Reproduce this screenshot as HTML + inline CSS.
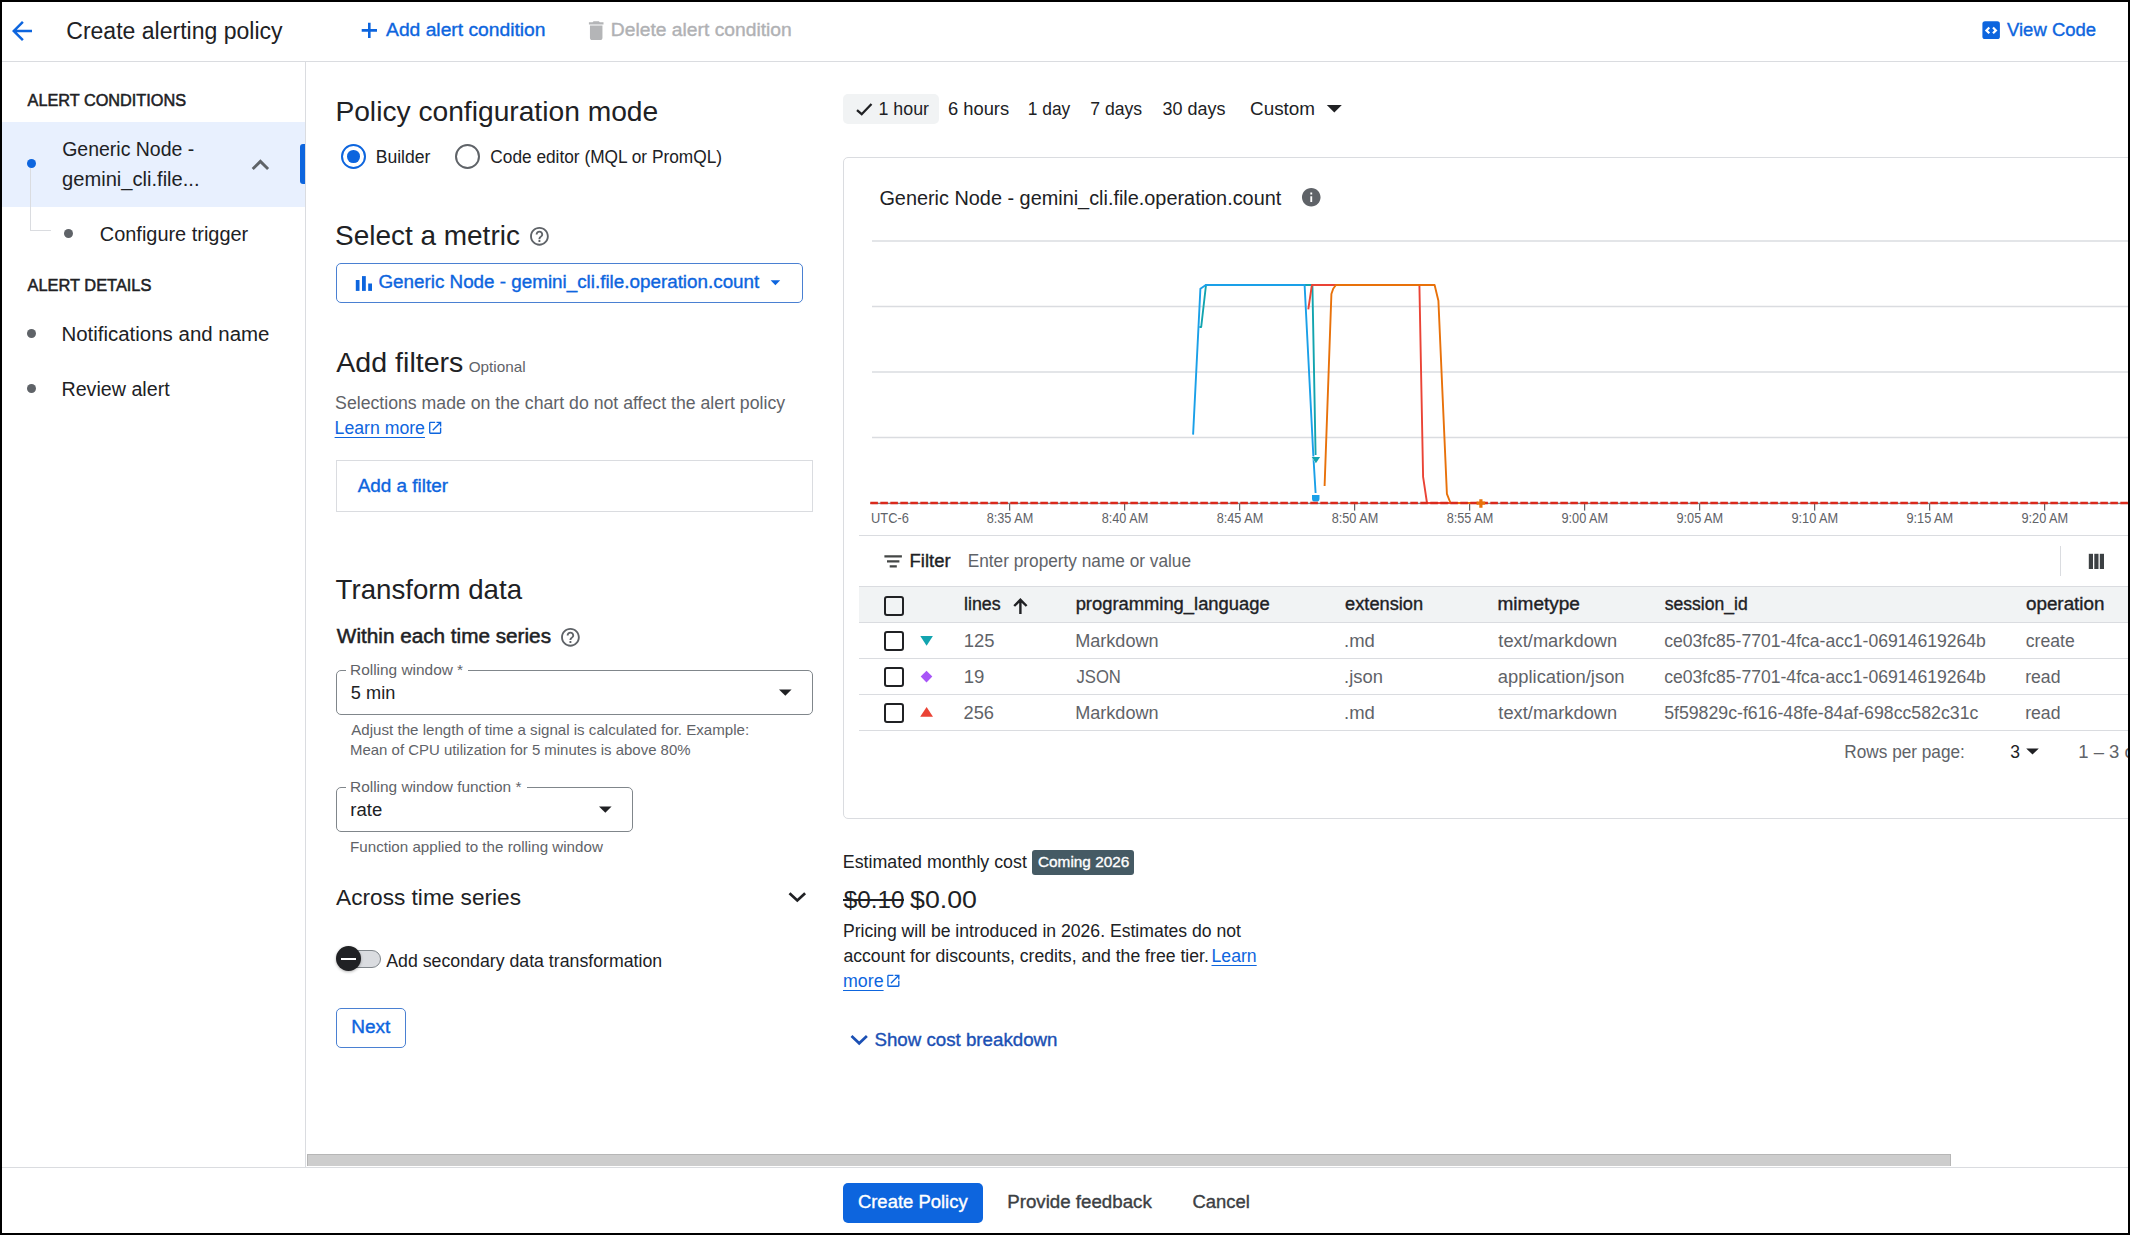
<!DOCTYPE html>
<html lang="en">
<head>
<meta charset="utf-8">
<title>Create alerting policy</title>
<style>
html,body{margin:0;padding:0;}
body{width:2130px;height:1235px;background:#fff;overflow:hidden;position:relative;font-family:"Liberation Sans", sans-serif;}
.t{position:absolute;white-space:pre;line-height:1;font-family:"Liberation Sans", sans-serif;transform-origin:0 0;}
.b{position:absolute;box-sizing:border-box;}
svg.full{position:absolute;left:0;top:0;}
</style>
</head>
<body>
<!-- ===== layout boxes ===== -->
<div class="b" style="left:2px;top:61px;width:2126px;height:1px;background:#dadce0;"></div>
<div class="b" style="left:305px;top:62px;width:1px;height:1105px;background:#dadce0;"></div>
<div class="b" style="left:2px;top:122px;width:303px;height:85px;background:#e8f0fe;"></div>
<div class="b" style="left:300px;top:144px;width:5px;height:40px;background:#0d65de;border-radius:3px 0 0 3px;"></div>
<!-- tree connector -->
<div class="b" style="left:30px;top:168px;width:1px;height:63px;background:#dadce0;"></div>
<div class="b" style="left:30px;top:230px;width:21px;height:1px;background:#dadce0;"></div>
<!-- step dots -->
<div class="b" style="left:26.5px;top:158.5px;width:9px;height:9px;border-radius:50%;background:#0d65de;"></div>
<div class="b" style="left:63.7px;top:228.5px;width:9px;height:9px;border-radius:50%;background:#5f6368;"></div>
<div class="b" style="left:26.7px;top:328.7px;width:9px;height:9px;border-radius:50%;background:#5f6368;"></div>
<div class="b" style="left:26.7px;top:383.7px;width:9px;height:9px;border-radius:50%;background:#5f6368;"></div>

<!-- radios -->
<div class="b" style="left:340.5px;top:144.2px;width:25px;height:25px;border-radius:50%;border:2.5px solid #0d65de;"></div>
<div class="b" style="left:347.2px;top:150.1px;width:12.6px;height:12.6px;border-radius:50%;background:#0d65de;"></div>
<div class="b" style="left:454.5px;top:144.2px;width:25px;height:25px;border-radius:50%;border:2.5px solid #5f6368;"></div>

<!-- metric button -->
<div class="b" style="left:336px;top:263px;width:467px;height:40px;border:1px solid #4a80d2;border-radius:5px;"></div>
<!-- add filter box -->
<div class="b" style="left:336px;top:460px;width:477px;height:52px;border:1px solid #dadce0;"></div>

<!-- rolling window select -->
<div class="b" style="left:336px;top:670px;width:477px;height:45px;border:1px solid #80868b;border-radius:5px;"></div>
<div class="b" style="left:345.6px;top:669px;width:122.8px;height:3px;background:#fff;"></div>
<!-- rolling window function select -->
<div class="b" style="left:336px;top:787px;width:297px;height:45px;border:1px solid #80868b;border-radius:5px;"></div>
<div class="b" style="left:345.6px;top:786px;width:181.4px;height:3px;background:#fff;"></div>

<!-- toggle -->
<div class="b" style="left:340px;top:950.2px;width:41px;height:17.6px;border-radius:9px;background:#dadce0;border:1px solid #80868b;"></div>
<div class="b" style="left:336px;top:946.4px;width:24.8px;height:24.8px;border-radius:50%;background:#202124;box-shadow:0 1px 3px rgba(0,0,0,.3);"></div>
<div class="b" style="left:340.8px;top:957.8px;width:15px;height:2px;background:#fff;"></div>

<!-- next button -->
<div class="b" style="left:336px;top:1008px;width:70px;height:40px;border:1px solid #4a80d2;border-radius:5px;"></div>

<!-- 1 hour chip -->
<div class="b" style="left:843px;top:94px;width:96px;height:30px;background:#f1f3f4;border-radius:5px;"></div>

<!-- chart card -->
<div class="b" style="left:843px;top:157px;width:1400px;height:662px;border:1px solid #dadce0;border-radius:5px;"></div>
<!-- under-chart line, table lines -->
<div class="b" style="left:859px;top:535px;width:1269px;height:1px;background:#dadce0;"></div>
<div class="b" style="left:859px;top:586px;width:1269px;height:37px;background:#f1f3f4;border-top:1px solid #dadce0;border-bottom:1px solid #dadce0;"></div>
<div class="b" style="left:859px;top:658px;width:1269px;height:1px;background:#dadce0;"></div>
<div class="b" style="left:859px;top:694px;width:1269px;height:1px;background:#dadce0;"></div>
<div class="b" style="left:859px;top:730px;width:1269px;height:1px;background:#dadce0;"></div>
<div class="b" style="left:2060px;top:546px;width:1px;height:30px;background:#dadce0;"></div>
<!-- checkboxes -->
<div class="b" style="left:884px;top:596px;width:20px;height:20px;border:2.2px solid #202124;border-radius:3px;"></div>
<div class="b" style="left:884px;top:631px;width:20px;height:20px;border:2.2px solid #202124;border-radius:3px;background:#fff;"></div>
<div class="b" style="left:884px;top:667px;width:20px;height:20px;border:2.2px solid #202124;border-radius:3px;background:#fff;"></div>
<div class="b" style="left:884px;top:703px;width:20px;height:20px;border:2.2px solid #202124;border-radius:3px;background:#fff;"></div>

<!-- strike line for $0.10 -->
<div class="b" style="left:842.9px;top:898.9px;width:61.4px;height:2.1px;background:#202124;z-index:5;"></div>
<!-- coming 2026 badge -->
<div class="b" style="left:1032px;top:850px;width:102px;height:25px;background:#455a64;border-radius:3px;"></div>

<!-- scrollbar + footer -->
<div class="b" style="left:307px;top:1154px;width:1644px;height:12px;background:#cdcdcd;border:1px solid #b6b6b6;border-bottom:none;"></div>
<div class="b" style="left:2px;top:1167px;width:2126px;height:1px;background:#dadce0;"></div>
<div class="b" style="left:843px;top:1183px;width:140px;height:40px;background:#0d65de;border-radius:5px;"></div>

<!-- ===== full-page SVG: chart + icons ===== -->
<svg class="full" width="2130" height="1235" viewBox="0 0 2130 1235">
  <!-- gridlines -->
  <g stroke="#dadce0" stroke-width="1.3">
    <line x1="872" y1="241" x2="2128" y2="241"/>
    <line x1="872" y1="306.5" x2="2128" y2="306.5"/>
    <line x1="872" y1="372" x2="2128" y2="372"/>
    <line x1="872" y1="437.5" x2="2128" y2="437.5"/>
    <line x1="872" y1="503.5" x2="2128" y2="503.5"/>
  </g>
  <!-- x ticks -->
  <g stroke="#5f6368" stroke-width="1.25">
    <line x1="1009.6" y1="503" x2="1009.6" y2="510.6"/>
    <line x1="1124.6" y1="503" x2="1124.6" y2="510.6"/>
    <line x1="1239.6" y1="503" x2="1239.6" y2="510.6"/>
    <line x1="1354.6" y1="503" x2="1354.6" y2="510.6"/>
    <line x1="1469.6" y1="503" x2="1469.6" y2="510.6"/>
    <line x1="1584.6" y1="503" x2="1584.6" y2="510.6"/>
    <line x1="1699.6" y1="503" x2="1699.6" y2="510.6"/>
    <line x1="1814.6" y1="503" x2="1814.6" y2="510.6"/>
    <line x1="1929.6" y1="503" x2="1929.6" y2="510.6"/>
    <line x1="2044.6" y1="503" x2="2044.6" y2="510.6"/>
  </g>
  <!-- axis baseline -->
  <line x1="870.3" y1="503.4" x2="2128" y2="503.4" stroke="#80868b" stroke-width="1.25"/>
  <!-- series -->
  <g fill="none" stroke-width="1.9" stroke-linejoin="round" stroke-linecap="butt">
    <polyline stroke="#12a4af" points="1199.4,327 1201.2,327 1206,285 1312.4,285 1315.6,455"/>
    <polyline stroke="#1aa0e8" points="1193.1,434.6 1200.4,288.7 1205.8,285 1304.6,285 1313.3,455 1315.6,493"/>
    <polyline stroke="#ea4335" points="1308.3,309.4 1311.9,285 1419.4,285 1423.1,476.8 1427,503 1451,503"/>
    <polyline stroke="#e8710a" points="1324.6,486 1331.4,294 1333.2,288.8 1335.9,285 1434.6,285 1438.4,300.8 1446.9,493.8 1450.5,503 1480.8,503"/>
  </g>
  <!-- markers -->
  <path d="M1311.1 456.4h9.6l-4.8 7.4z" fill="#fff"/>
  <path d="M1311.7 457h8.4l-4.2 6.2z" fill="#12a4af"/>
  <path d="M1312 495.1h7.5v3.3a3.2 3.2 0 0 1-3.2 3.2h-1.1a3.2 3.2 0 0 1-3.2-3.2z" fill="#1aa0e8"/>
  <!-- threshold -->
  <line x1="870.3" y1="503.05" x2="2128" y2="503.05" stroke="#d92a1c" stroke-width="2.5" stroke-dasharray="7.6 2.4"/>
  <path d="M1476.6 503.2h8.5M1480.9 499.2v8.5" stroke="#e8710a" stroke-width="3.2" fill="none"/>

  <!-- table row markers -->
  <path d="M920.3 636h12.6l-6.3 9.8z" fill="#12a4af"/>
  <path d="M926.5 670.8l5.8 5.8-5.8 5.8-5.8-5.8z" fill="#a855f7"/>
  <path d="M920.2 716.8h12.8l-6.4-9.8z" fill="#ea4335"/>

  <!-- === icons (material paths in 24-unit boxes) === -->
  <!-- back arrow -->
  <g transform="translate(7,16) scale(1.25)" fill="#0d65de"><path d="M20 11H7.83l5.59-5.59L12 4l-8 8 8 8 1.41-1.41L7.83 13H20v-2z"/></g>
  <!-- plus -->
  <path d="M361.7 29.1h15.3v2.6h-15.3zM368 22.8h2.6v15.2h-2.6z" fill="#0d65de"/>
  <!-- trash -->
  <g transform="translate(583.7,18.2) scale(1.0417)" fill="#b4b5b7"><path d="M6 19c0 1.1.9 2 2 2h8c1.1 0 2-.9 2-2V7H6v12zM19 4h-3.5l-1-1h-5l-1 1H5v2h14V4z"/></g>
  <!-- view code -->
  <rect x="1982.4" y="21.3" width="17.5" height="17.7" rx="2.6" fill="#0d65de"/>
  <path d="M1989.3 27.5l-2.9 2.9 2.9 2.9M1993 27.5l2.9 2.9-2.9 2.9" stroke="#fff" stroke-width="2.2" fill="none"/>
  <!-- sidebar chevron up -->
  <g transform="translate(243,147.7) scale(1.45)" fill="#5f6368"><path d="M12 8l-6 6 1.41 1.41L12 10.83l4.59 4.58L18 14z"/></g>
  <!-- help outline icons -->
  <g transform="translate(528.2,225.1) scale(0.935)" fill="#5f6368"><path d="M11 18h2v-2h-2v2zm1-16C6.48 2 2 6.48 2 12s4.48 10 10 10 10-4.48 10-10S17.52 2 12 2zm0 18c-4.41 0-8-3.59-8-8s3.59-8 8-8 8 3.59 8 8-3.59 8-8 8zm0-14c-2.21 0-4 1.79-4 4h2c0-1.1.9-2 2-2s2 .9 2 2c0 2-3 1.75-3 5h2c0-2.25 3-2.5 3-5 0-2.21-1.79-4-4-4z"/></g>
  <g transform="translate(559.2,626.1) scale(0.935)" fill="#5f6368"><path d="M11 18h2v-2h-2v2zm1-16C6.480 2 2 6.480 2 12s4.480 10 10 10 10-4.480 10-10S17.520 2 12 2zm0 18c-4.410 0-8-3.590-8-8s3.590-8 8-8 8 3.590 8 8-3.590 8-8 8zm0-14c-2.210 0-4 1.790-4 4h2c0-1.100.900-2 2-2s2 .900 2 2c0 2-3 1.750-3 5h2c0-2.250 3-2.500 3-5 0-2.210-1.790-4-4-4z"/></g>
  <!-- metric bar icon -->
  <g fill="#0d65de">
    <rect x="355.8" y="280" width="3.7" height="10.9"/>
    <rect x="362" y="276.1" width="3.8" height="14.8"/>
    <rect x="368.2" y="283.5" width="3.8" height="7.4"/>
  </g>
  <!-- carets -->
  <path d="M770.6 280.2h9.6l-4.8 5z" fill="#0d65de"/>
  <path d="M779 689.4h12.6l-6.3 6.4z" fill="#202124"/>
  <path d="M599 806.4h12.6l-6.3 6.4z" fill="#202124"/>
  <path d="M1326.8 105h15l-7.5 7.6z" fill="#202124"/>
  <path d="M2026.2 748.4h12.6l-6.3 6.2z" fill="#202124"/>
  <!-- external link icons -->
  <g transform="translate(427,419.6) scale(0.68)" fill="#0d65de"><path d="M19 19H5V5h7V3H5c-1.11 0-2 .9-2 2v14c0 1.1.89 2 2 2h14c1.1 0 2-.9 2-2v-7h-2v7zM14 3v2h3.59l-9.83 9.83 1.41 1.41L19 6.41V10h2V3h-7z"/></g>
  <g transform="translate(885.2,972.7) scale(0.68)" fill="#0d65de"><path d="M19 19H5V5h7V3H5c-1.110 0-2 .900-2 2v14c0 1.100.890 2 2 2h14c1.100 0 2-.900 2-2v-7h-2v7zM14 3v2h3.590l-9.830 9.830 1.410 1.410L19 6.410V10h2V3h-7z"/></g>
  <!-- across chevron down -->
  <path d="M789.5 893.2l7.8 7.2 7.8-7.2" stroke="#202124" stroke-width="2.7" fill="none"/>
  <!-- 1 hour check -->
  <path d="M857 110.2l4.7 4 9.8-10.2" stroke="#202124" stroke-width="2.3" fill="none"/>
  <!-- info icon -->
  <g transform="translate(1300.1,186.1) scale(0.93)" fill="#5f6368"><path d="M12 2C6.48 2 2 6.48 2 12s4.48 10 10 10 10-4.48 10-10S17.52 2 12 2zm1 15h-2v-6h2v6zm0-8h-2V7h2v2z"/></g>
  <!-- filter icon -->
  <path d="M884.4 555.2h17.5v2.3h-17.5zM887 560.3h12.4v2.3h-12.4zM889.7 565.3h7.1v2.3h-7.1z" fill="#444746"/>
  <!-- sort arrow -->
  <path d="M1020.4 614v-13.6M1014.2 606l6.2-6.2 6.2 6.2" stroke="#202124" stroke-width="2.4" fill="none"/>
  <!-- columns icon -->
  <g fill="#3c4043">
    <rect x="2088.8" y="553.8" width="4.2" height="15.2"/>
    <rect x="2094.3" y="553.8" width="4.2" height="15.2"/>
    <rect x="2099.8" y="553.8" width="4.2" height="15.2"/>
  </g>
  <!-- show cost chevron -->
  <path d="M851.5 1036.1l7.7 7.2 7.7-7.2" stroke="#1b50b4" stroke-width="2.7" fill="none"/>
</svg>

<span class="t" style="left:66px;top:20px;font-size:23px;color:#202124;transform:translateX(0.25px) scaleX(1.0012);">Create alerting policy</span>
<span class="t" style="left:386px;top:22px;font-size:17.5px;color:#0d65de;transform:translateX(0.07px) scaleX(1.0995);-webkit-text-stroke:0.35px #0d65de;">Add alert condition</span>
<span class="t" style="left:610px;top:22px;font-size:17.5px;color:#b0b1b4;transform:translateX(0.82px) scaleX(1.1002);-webkit-text-stroke:0.35px #b0b1b4;">Delete alert condition</span>
<span class="t" style="left:2007px;top:22px;font-size:17.5px;color:#0d65de;transform:translateX(0.00px) scaleX(1.0567);-webkit-text-stroke:0.35px #0d65de;">View Code</span>
<span class="t" style="left:27px;top:92px;font-size:17.25px;color:#202124;transform:translateX(0.54px) scaleX(0.9431);-webkit-text-stroke:0.55px #202124;">ALERT CONDITIONS</span>
<span class="t" style="left:62px;top:139px;font-size:20px;color:#202124;transform:translateX(0.23px) scaleX(0.9735);">Generic Node -</span>
<span class="t" style="left:62px;top:169px;font-size:20px;color:#202124;transform:translateX(0.05px) scaleX(1.0056);">gemini_cli.file...</span>
<span class="t" style="left:99px;top:224px;font-size:20px;color:#202124;transform:translateX(0.80px) scaleX(0.9963);">Configure trigger</span>
<span class="t" style="left:27px;top:277px;font-size:17.25px;color:#202124;transform:translateX(0.54px) scaleX(0.9500);-webkit-text-stroke:0.55px #202124;">ALERT DETAILS</span>
<span class="t" style="left:61px;top:324px;font-size:20px;color:#202124;transform:translateX(0.41px) scaleX(1.0227);">Notifications and name</span>
<span class="t" style="left:61px;top:379px;font-size:20px;color:#202124;transform:translateX(0.48px) scaleX(0.9829);">Review alert</span>
<span class="t" style="left:335px;top:98px;font-size:27.5px;color:#202124;transform:translateX(0.39px) scaleX(1.0250);">Policy configuration mode</span>
<span class="t" style="left:375px;top:149px;font-size:17.5px;color:#202124;transform:translateX(0.69px) scaleX(1.0047);">Builder</span>
<span class="t" style="left:490px;top:149px;font-size:17.5px;color:#202124;transform:translateX(0.31px) scaleX(0.9871);">Code editor (MQL or PromQL)</span>
<span class="t" style="left:335px;top:222px;font-size:27.5px;color:#202124;transform:translateX(0.03px) scaleX(1.0164);">Select a metric</span>
<span class="t" style="left:378px;top:274px;font-size:17.5px;color:#0d65de;transform:translateX(0.39px) scaleX(1.0757);-webkit-text-stroke:0.35px #0d65de;">Generic Node - gemini_cli.file.operation.count</span>
<span class="t" style="left:336px;top:349px;font-size:27.5px;color:#202124;transform:translateX(0.30px) scaleX(1.0392);">Add filters</span>
<span class="t" style="left:468px;top:359px;font-size:15px;color:#5f6368;transform:translateX(0.74px) scaleX(1.0175);">Optional</span>
<span class="t" style="left:335px;top:395px;font-size:17.5px;color:#5f6368;transform:translateX(0.09px) scaleX(1.0107);">Selections made on the chart do not affect the alert policy</span>
<span class="t" style="left:334px;top:420px;font-size:17.5px;color:#0d65de;transform:translateX(0.59px) scaleX(1.0097);text-decoration:underline;text-underline-offset:3px;text-decoration-thickness:1px;">Learn more</span>
<span class="t" style="left:357px;top:478px;font-size:17.5px;color:#0d65de;transform:translateX(0.67px) scaleX(1.0806);-webkit-text-stroke:0.35px #0d65de;">Add a filter</span>
<span class="t" style="left:335px;top:576px;font-size:27.5px;color:#202124;transform:translateX(0.60px) scaleX(1.0054);">Transform data</span>
<span class="t" style="left:336px;top:626px;font-size:20px;color:#202124;transform:translateX(0.86px) scaleX(1.0358);-webkit-text-stroke:0.5px #202124;">Within each time series</span>
<span class="t" style="left:350px;top:662px;font-size:15px;color:#5f6368;transform:translateX(0.02px) scaleX(1.0276);">Rolling window *</span>
<span class="t" style="left:350px;top:684px;font-size:18.75px;color:#202124;transform:translateX(0.87px) scaleX(0.9682);">5 min</span>
<span class="t" style="left:351px;top:722px;font-size:15px;color:#5f6368;transform:translateX(0.30px) scaleX(1.0067);">Adjust the length of time a signal is calculated for. Example:</span>
<span class="t" style="left:350px;top:742px;font-size:15px;color:#5f6368;transform:translateX(0.06px) scaleX(0.9959);">Mean of CPU utilization for 5 minutes is above 80%</span>
<span class="t" style="left:350px;top:779px;font-size:15px;color:#5f6368;transform:translateX(0.01px) scaleX(1.0281);">Rolling window function *</span>
<span class="t" style="left:350px;top:801px;font-size:18.75px;color:#202124;transform:translateX(0.36px) scaleX(0.9884);">rate</span>
<span class="t" style="left:350px;top:839px;font-size:15px;color:#5f6368;transform:translateX(0.04px) scaleX(1.0107);">Function applied to the rolling window</span>
<span class="t" style="left:336px;top:887px;font-size:22.5px;color:#202124;transform:translateX(0.10px) scaleX(1.0060);">Across time series</span>
<span class="t" style="left:386px;top:953px;font-size:17.5px;color:#202124;transform:translateX(0.30px) scaleX(1.0127);">Add secondary data transformation</span>
<span class="t" style="left:351px;top:1019px;font-size:17.5px;color:#0d65de;transform:translateX(0.14px) scaleX(1.0878);-webkit-text-stroke:0.35px #0d65de;">Next</span>
<span class="t" style="left:878px;top:101px;font-size:17.5px;color:#202124;transform:translateX(0.43px) scaleX(1.0188);">1 hour</span>
<span class="t" style="left:947px;top:101px;font-size:17.5px;color:#202124;transform:translateX(0.95px) scaleX(1.0485);">6 hours</span>
<span class="t" style="left:1027px;top:101px;font-size:17.5px;color:#202124;transform:translateX(0.76px) scaleX(0.9928);">1 day</span>
<span class="t" style="left:1090px;top:101px;font-size:17.5px;color:#202124;transform:translateX(0.29px) scaleX(1.0060);">7 days</span>
<span class="t" style="left:1162px;top:101px;font-size:17.5px;color:#202124;transform:translateX(0.43px) scaleX(1.0267);">30 days</span>
<span class="t" style="left:1250px;top:101px;font-size:17.5px;color:#202124;transform:translateX(0.02px) scaleX(1.0793);">Custom</span>
<span class="t" style="left:879px;top:189px;font-size:19.5px;color:#202124;transform:translateX(0.38px) scaleX(1.0186);">Generic Node - gemini_cli.file.operation.count</span>
<span class="t" style="left:871px;top:512px;font-size:13.75px;color:#5f6368;transform:translateX(0.07px) scaleX(0.9342);">UTC-6</span>
<span class="t" style="left:986px;top:512px;font-size:13.75px;color:#5f6368;transform:translateX(0.64px) scaleX(0.9231);">8:35 AM</span>
<span class="t" style="left:1101px;top:512px;font-size:13.75px;color:#5f6368;transform:translateX(0.64px) scaleX(0.9231);">8:40 AM</span>
<span class="t" style="left:1216px;top:512px;font-size:13.75px;color:#5f6368;transform:translateX(0.64px) scaleX(0.9231);">8:45 AM</span>
<span class="t" style="left:1331px;top:512px;font-size:13.75px;color:#5f6368;transform:translateX(0.64px) scaleX(0.9231);">8:50 AM</span>
<span class="t" style="left:1446px;top:512px;font-size:13.75px;color:#5f6368;transform:translateX(0.64px) scaleX(0.9231);">8:55 AM</span>
<span class="t" style="left:1561px;top:512px;font-size:13.75px;color:#5f6368;transform:translateX(0.40px) scaleX(0.9278);">9:00 AM</span>
<span class="t" style="left:1676px;top:512px;font-size:13.75px;color:#5f6368;transform:translateX(0.40px) scaleX(0.9278);">9:05 AM</span>
<span class="t" style="left:1791px;top:512px;font-size:13.75px;color:#5f6368;transform:translateX(0.40px) scaleX(0.9278);">9:10 AM</span>
<span class="t" style="left:1906px;top:512px;font-size:13.75px;color:#5f6368;transform:translateX(0.40px) scaleX(0.9278);">9:15 AM</span>
<span class="t" style="left:2021px;top:512px;font-size:13.75px;color:#5f6368;transform:translateX(0.40px) scaleX(0.9278);">9:20 AM</span>
<span class="t" style="left:909px;top:553px;font-size:17.5px;color:#202124;transform:translateX(0.58px) scaleX(1.0533);-webkit-text-stroke:0.35px #202124;">Filter</span>
<span class="t" style="left:967px;top:553px;font-size:17.5px;color:#5f6368;transform:translateX(0.72px) scaleX(0.9853);">Enter property name or value</span>
<span class="t" style="left:963px;top:596px;font-size:17.5px;color:#202124;transform:translateX(0.98px) scaleX(1.0174);-webkit-text-stroke:0.35px #202124;">lines</span>
<span class="t" style="left:1075px;top:596px;font-size:17.5px;color:#202124;transform:translateX(0.65px) scaleX(1.0494);-webkit-text-stroke:0.35px #202124;">programming_language</span>
<span class="t" style="left:1345px;top:596px;font-size:17.5px;color:#202124;transform:translateX(0.08px) scaleX(1.0422);-webkit-text-stroke:0.35px #202124;">extension</span>
<span class="t" style="left:1497px;top:596px;font-size:17.5px;color:#202124;transform:translateX(0.51px) scaleX(1.0855);-webkit-text-stroke:0.35px #202124;">mimetype</span>
<span class="t" style="left:1664px;top:596px;font-size:17.5px;color:#202124;transform:translateX(0.65px) scaleX(1.0037);-webkit-text-stroke:0.35px #202124;">session_id</span>
<span class="t" style="left:2025px;top:596px;font-size:17.5px;color:#202124;transform:translateX(0.96px) scaleX(1.0755);-webkit-text-stroke:0.35px #202124;">operation</span>
<span class="t" style="left:963px;top:633px;font-size:17.5px;color:#5f6368;transform:translateX(0.68px) scaleX(1.0532);">125</span>
<span class="t" style="left:963px;top:669px;font-size:17.5px;color:#5f6368;transform:translateX(0.67px) scaleX(1.0629);">19</span>
<span class="t" style="left:963px;top:705px;font-size:17.5px;color:#5f6368;transform:translateX(0.56px) scaleX(1.0436);">256</span>
<span class="t" style="left:1075px;top:633px;font-size:17.5px;color:#5f6368;transform:translateX(0.15px) scaleX(1.0333);">Markdown</span>
<span class="t" style="left:1076px;top:669px;font-size:17.5px;color:#5f6368;transform:translateX(0.46px) scaleX(0.9511);">JSON</span>
<span class="t" style="left:1075px;top:705px;font-size:17.5px;color:#5f6368;transform:translateX(0.15px) scaleX(1.0333);">Markdown</span>
<span class="t" style="left:1344px;top:633px;font-size:17.5px;color:#5f6368;transform:translateX(0.02px) scaleX(1.0566);">.md</span>
<span class="t" style="left:1344px;top:669px;font-size:17.5px;color:#5f6368;transform:translateX(0.02px) scaleX(1.0511);">.json</span>
<span class="t" style="left:1344px;top:705px;font-size:17.5px;color:#5f6368;transform:translateX(0.02px) scaleX(1.0566);">.md</span>
<span class="t" style="left:1498px;top:633px;font-size:17.5px;color:#5f6368;transform:translateX(0.34px) scaleX(1.0444);">text/markdown</span>
<span class="t" style="left:1497px;top:669px;font-size:17.5px;color:#5f6368;transform:translateX(0.81px) scaleX(1.0509);">application/json</span>
<span class="t" style="left:1498px;top:705px;font-size:17.5px;color:#5f6368;transform:translateX(0.34px) scaleX(1.0444);">text/markdown</span>
<span class="t" style="left:1664px;top:633px;font-size:17.5px;color:#5f6368;transform:translateX(0.15px) scaleX(1.0050);">ce03fc85-7701-4fca-acc1-06914619264b</span>
<span class="t" style="left:1664px;top:669px;font-size:17.5px;color:#5f6368;transform:translateX(0.15px) scaleX(1.0050);">ce03fc85-7701-4fca-acc1-06914619264b</span>
<span class="t" style="left:1664px;top:705px;font-size:17.5px;color:#5f6368;transform:translateX(0.14px) scaleX(1.0124);">5f59829c-f616-48fe-84af-698cc582c31c</span>
<span class="t" style="left:2025px;top:633px;font-size:17.5px;color:#5f6368;transform:translateX(0.75px) scaleX(1.0064);">create</span>
<span class="t" style="left:2025px;top:669px;font-size:17.5px;color:#5f6368;transform:translateX(0.14px) scaleX(1.0076);">read</span>
<span class="t" style="left:2025px;top:705px;font-size:17.5px;color:#5f6368;transform:translateX(0.14px) scaleX(1.0076);">read</span>
<span class="t" style="left:1844px;top:744px;font-size:17.5px;color:#5f6368;transform:translateX(0.33px) scaleX(0.9833);">Rows per page:</span>
<span class="t" style="left:2010px;top:744px;font-size:17.5px;color:#202124;transform:translateX(0.25px) scaleX(1.0000);">3</span>
<span class="t" style="left:2078px;top:744px;font-size:17.5px;color:#5f6368;transform:translateX(0.28px) scaleX(1.0563);">1 – 3 of 3</span>
<span class="t" style="left:842px;top:854px;font-size:17.5px;color:#202124;transform:translateX(0.77px) scaleX(1.0176);">Estimated monthly cost</span>
<span class="t" style="left:1037px;top:854px;font-size:15px;color:#ffffff;transform:translateX(0.99px) scaleX(1.0232);-webkit-text-stroke:0.35px #ffffff;">Coming 2026</span>
<span class="t" style="left:843px;top:888px;font-size:24px;color:#202124;transform:translateX(0.75px) scaleX(1.0094);">$0.10</span>
<span class="t" style="left:910px;top:888px;font-size:24px;color:#202124;transform:translateX(0.02px) scaleX(1.1132);">$0.00</span>
<span class="t" style="left:842px;top:923px;font-size:17.5px;color:#202124;transform:translateX(0.89px) scaleX(1.0055);">Pricing will be introduced in 2026. Estimates do not</span>
<span class="t" style="left:843px;top:948px;font-size:17.5px;color:#202124;transform:translateX(0.44px) scaleX(1.0069);">account for discounts, credits, and the free tier.</span>
<span class="t" style="left:1211px;top:948px;font-size:17.5px;color:#0d65de;transform:translateX(0.49px) scaleX(1.0095);text-decoration:underline;text-underline-offset:3px;text-decoration-thickness:1px;">Learn</span>
<span class="t" style="left:843px;top:973px;font-size:17.5px;color:#0d65de;transform:translateX(0.03px) scaleX(1.0172);text-decoration:underline;text-underline-offset:3px;text-decoration-thickness:1px;">more</span>
<span class="t" style="left:874px;top:1032px;font-size:17.5px;color:#1b50b4;transform:translateX(0.40px) scaleX(1.0696);-webkit-text-stroke:0.35px #1b50b4;">Show cost breakdown</span>
<span class="t" style="left:857px;top:1194px;font-size:17.5px;color:#ffffff;transform:translateX(0.91px) scaleX(1.0541);-webkit-text-stroke:0.35px #ffffff;">Create Policy</span>
<span class="t" style="left:1007px;top:1194px;font-size:17.5px;color:#3c4043;transform:translateX(0.16px) scaleX(1.0696);-webkit-text-stroke:0.35px #3c4043;">Provide feedback</span>
<span class="t" style="left:1192px;top:1194px;font-size:17.5px;color:#3c4043;transform:translateX(0.41px) scaleX(1.0540);-webkit-text-stroke:0.35px #3c4043;">Cancel</span>
<div class="b" style="left:0;top:0;width:2130px;height:1235px;border:2px solid #000;"></div>
</body>
</html>
